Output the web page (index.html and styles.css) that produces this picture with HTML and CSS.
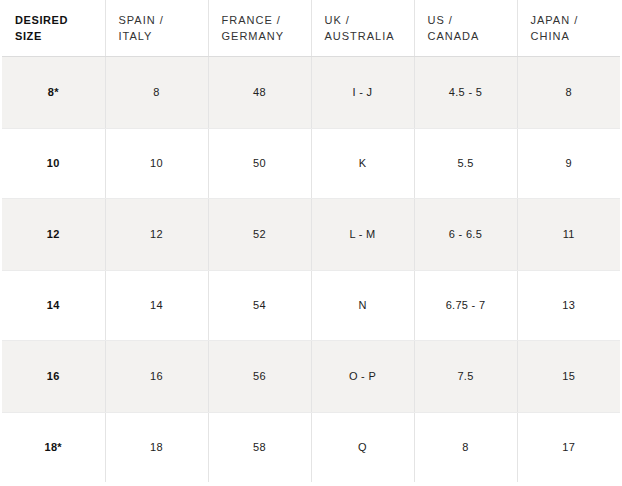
FILE: index.html
```
<!DOCTYPE html>
<html>
<head>
<meta charset="utf-8">
<link rel="stylesheet" href="styles.css">
</head>
<body>
<table class="sizes">
  <thead>
    <tr class="head">
      <th class="key">DESIRED<br>SIZE</th>
      <th>SPAIN /<br>ITALY</th>
      <th>FRANCE /<br>GERMANY</th>
      <th>UK /<br>AUSTRALIA</th>
      <th>US /<br>CANADA</th>
      <th>JAPAN /<br>CHINA</th>
    </tr>
  </thead>
  <tbody>
    <tr class="alt"><td class="key">8*</td><td>8</td><td>48</td><td>I - J</td><td>4.5 - 5</td><td>8</td></tr>
    <tr><td class="key">10</td><td>10</td><td>50</td><td>K</td><td>5.5</td><td>9</td></tr>
    <tr class="alt"><td class="key">12</td><td>12</td><td>52</td><td>L - M</td><td>6 - 6.5</td><td>11</td></tr>
    <tr><td class="key">14</td><td>14</td><td>54</td><td>N</td><td>6.75 - 7</td><td>13</td></tr>
    <tr class="alt"><td class="key">16</td><td>16</td><td>56</td><td>O - P</td><td>7.5</td><td>15</td></tr>
    <tr><td class="key">18*</td><td>18</td><td>58</td><td>Q</td><td>8</td><td>17</td></tr>
  </tbody>
</table>
</body>
</html>
```
FILE: styles.css
```
html, body {
  margin: 0;
  padding: 0;
  background: #ffffff;
}
body {
  padding-left: 2px;
  font-family: "Liberation Sans", Arial, Helvetica, sans-serif;
  color: #222222;
}
.sizes {
  border-collapse: collapse;
  border-spacing: 0;
  table-layout: fixed;
  width: 618px;
  font-size: 11px;
}
.sizes th,
.sizes td {
  box-sizing: border-box;
  width: 103px;
  border-left: 1px solid #e4e4e4;
  padding: 0;
}
.sizes th:first-child,
.sizes td:first-child {
  border-left: none;
}
.sizes tr.head {
  height: 56px;
}
.sizes tbody tr {
  height: 70px;
}
.sizes tbody tr.alt {
  height: 72px;
}
.sizes th {
  padding: 12px 4px 0 13px;
  vertical-align: top;
  text-align: left;
  font-weight: normal;
  line-height: 16px;
  letter-spacing: 1px;
  color: #333333;
  border-bottom: 1px solid #dcdcdc;
}
.sizes th.key {
  font-weight: bold;
  color: #111111;
  letter-spacing: 0.6px;
}
.sizes td {
  text-align: center;
  vertical-align: middle;
  line-height: 14px;
  letter-spacing: 0.3px;
  border-bottom: 1px solid #ebebeb;
}
.sizes tr.alt td {
  background: #f3f2f0;
}
.sizes tbody tr:last-child td {
  border-bottom: none;
}
.sizes td.key {
  font-weight: bold;
  color: #111111;
}
```
